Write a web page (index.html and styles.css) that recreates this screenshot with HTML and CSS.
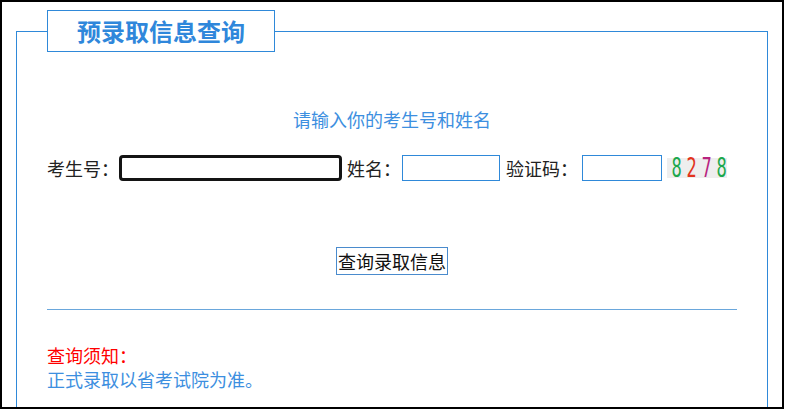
FILE: index.html
```html
<!DOCTYPE html>
<html lang="zh-CN">
  <head>
    <meta charset="UTF-8" />
    <meta name="viewport" content="width=device-width, initial-scale=1.0" />
    <title>预录取信息查询</title>
    <link rel="stylesheet" href="styles.css">
  </head>
  <body>
    <div id="frame">
      <fieldset id="box">
        <legend>预录取信息查询</legend>
        <p class="tip">请输入你的考生号和姓名</p>

        <div class="row">
          <label for="ksh">考生号：</label>
          <input type="text" id="ksh" class="focused" />
          <label for="xm" class="gap">姓名：</label>
          <input type="text" id="xm" class="short" />
          <label for="yzm" class="gap2">验证码：</label>
          <input type="text" id="yzm" class="code" />
          <span class="captcha">
            <span class="c1">8</span><span class="c2">2</span><span class="c3">7</span><span class="c1">8</span>
          </span>
        </div>

        <div class="btnrow">
          <input type="button" value="查询录取信息" />
        </div>

        <hr />

        <div class="notice">
          <div class="red">查询须知：</div>
          <div class="blue">正式录取以省考试院为准。</div>
        </div>
      </fieldset>
    </div>
  </body>
</html>
```

FILE: styles.css
```css
* {
  margin: 0px;
  font-family: "Noto Sans CJK SC", "Liberation Sans", sans-serif;
}

body {
  margin: 0px;
  background-color: #fff;
}

#frame {
  width: 784px;
  height: 409px;
  box-sizing: border-box;
  border: 2px solid #000;
  overflow: hidden;
}

#box {
  margin: 8px 14px 0px 14px;
  padding: 0px 30px 40px 30px;
  border: 1px solid #2f89d9;
  min-width: 0;
}

#box legend {
  padding: 4px 29px;
  border: 1px solid #2f89d9;
  font-size: 24px;
  line-height: 32px;
  font-weight: bold;
  color: #2f87db;
}

.tip {
  margin-top: 55px;
  text-align: center;
  font-size: 18px;
  line-height: 24px;
  color: #3d8fe0;
}

.row {
  margin-top: 24px;
  display: flex;
  align-items: center;
  height: 26px;
  font-size: 18px;
  color: #222;
}

.row label {
  line-height: 24px;
}

.row .gap {
  margin-left: 5px;
}

.row .gap2 {
  margin-left: 6px;
}

.row input {
  box-sizing: border-box;
  height: 26px;
  border: 1px solid #2f89d9;
  padding: 0px 3px;
  font-size: 14px;
  background: #fff;
}

.row .focused {
  width: 223px;
  border: 3px solid #141414;
  border-radius: 4px;
}

.row .short {
  margin-left: 1px;
  width: 98px;
}

.row .code {
  margin-left: 4px;
  width: 80px;
}

.captcha {
  margin-left: 5px;
  width: 60px;
  height: 20px;
  background-color: #eeeeee;
  display: flex;
  justify-content: space-around;
  align-items: center;
}

.captcha span {
  display: block;
  width: 12px;
  text-align: center;
  font-family: "DejaVu Sans", sans-serif;
  font-size: 27px;
  line-height: 20px;
  transform: scaleX(0.6);
}

.c1 { color: #1ca84c; }
.c2 { color: #e2341c; }
.c3 { color: #b8237f; }

.btnrow {
  margin-top: 66px;
  text-align: center;
}

.btnrow input {
  box-sizing: border-box;
  height: 28px;
  padding: 0px 1px;
  border: 1px solid #4a8bcd;
  background-color: #fff;
  font-size: 18px;
  color: #111;
}

hr {
  margin-top: 34px;
  border: 0px;
  border-top: 1px solid #6aa7dc;
  height: 0px;
}

.notice {
  margin-top: 33px;
  font-size: 18px;
  line-height: 24px;
}

.red {
  color: #ff0000;
}

.blue {
  color: #3d8fe0;
}
```
